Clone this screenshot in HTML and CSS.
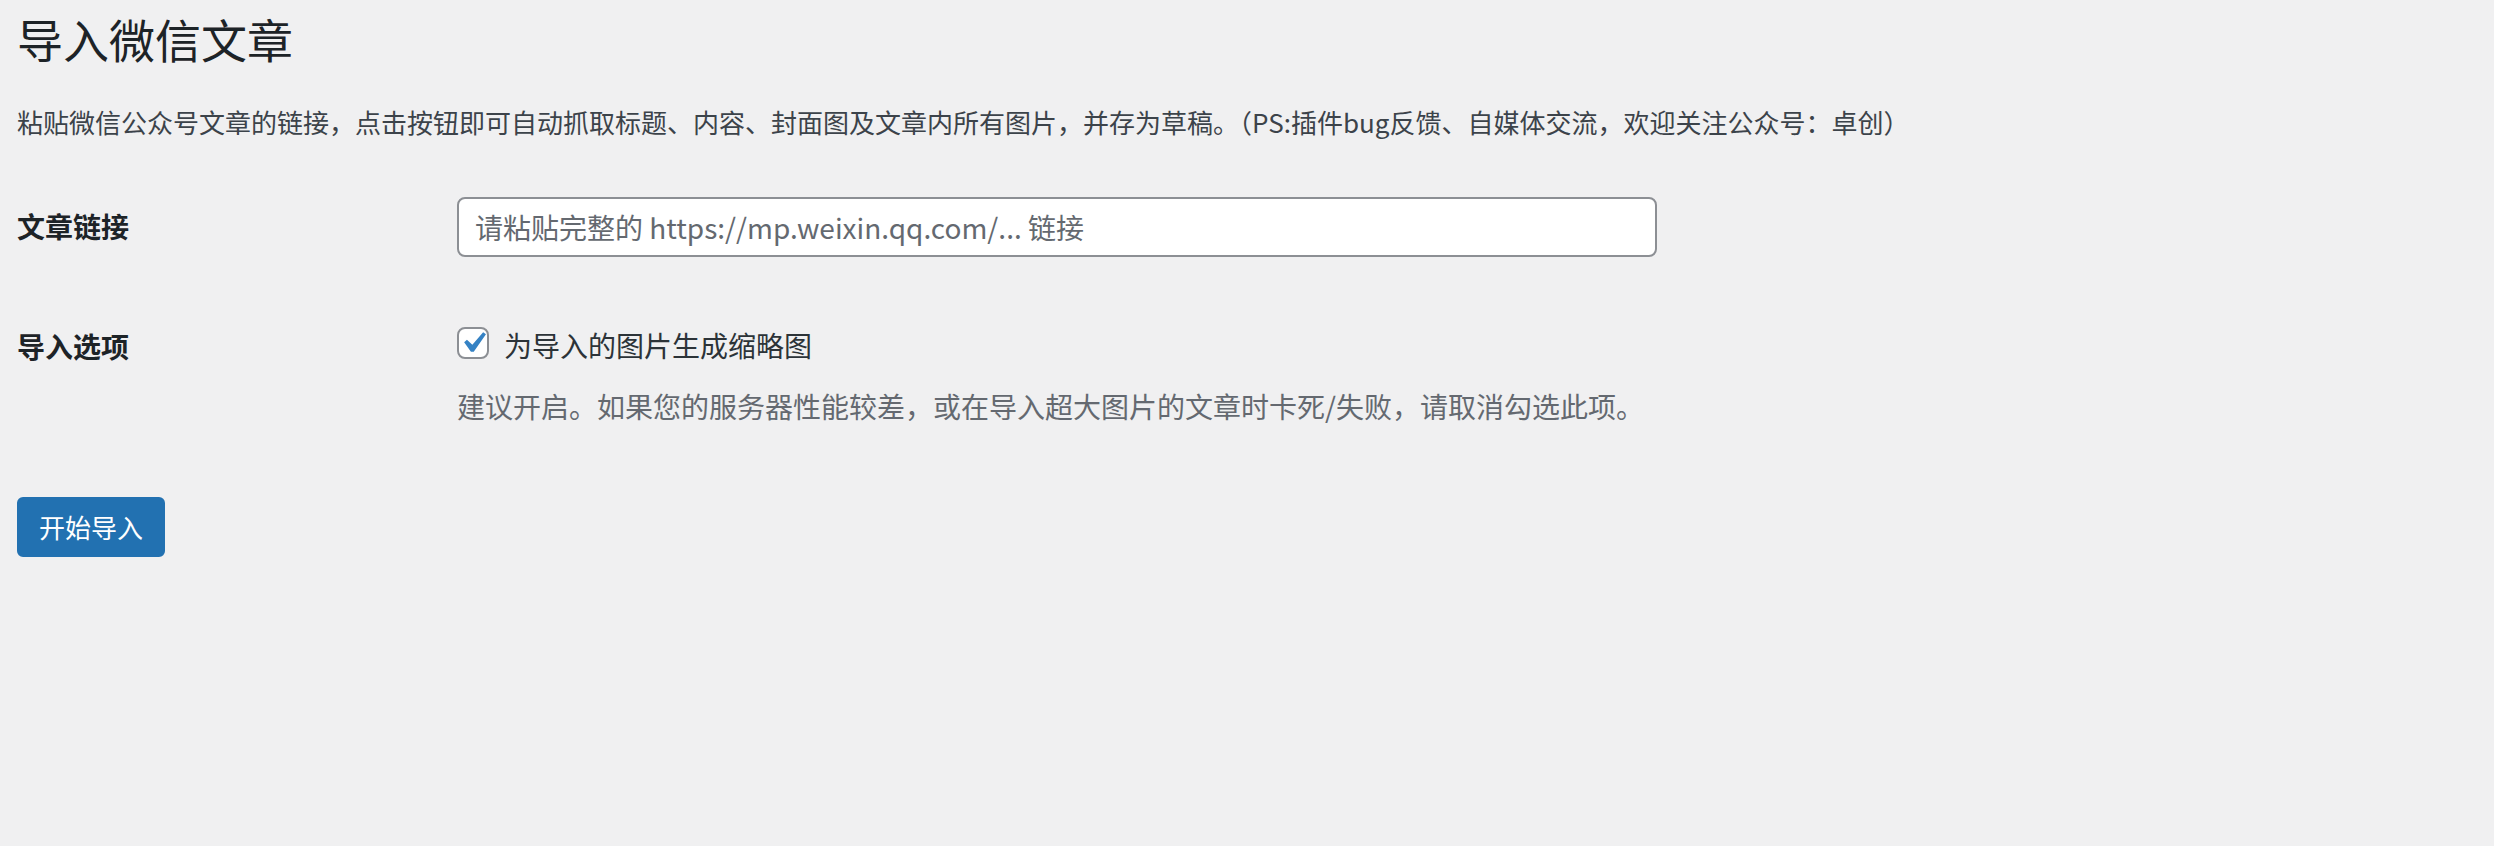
FILE: index.html
```html
<!DOCTYPE html>
<html lang="zh-CN">
<head>
<meta charset="utf-8">
<title>导入微信文章</title>
<link rel="stylesheet" href="styles.css">
</head>
<body>
<div class="wrap">
  <h1 class="page-title">导入微信文章</h1>
  <p class="intro">粘贴微信公众号文章的链接，点击按钮即可自动抓取标题、内容、封面图及文章内所有图片，并存为草稿。（PS:插件bug反馈、自媒体交流，欢迎关注公众号：卓创）</p>
  <form class="form-table">
    <div class="form-row">
      <div class="row-label">文章链接</div>
      <div class="row-field">
        <input class="text-input" type="text" placeholder="请粘贴完整的 https://mp.weixin.qq.com/... 链接">
      </div>
    </div>
    <div class="form-row">
      <div class="row-label">导入选项</div>
      <div class="row-field">
        <label class="check-line">
          <span class="check-box">
            <svg viewBox="0 0 20 20" width="42" height="42"><path fill="#3582c4" d="M14.83 4.89l1.34.94-5.81 8.38H9.02L5.78 9.67l1.34-1.25 2.570 2.4z"/></svg>
          </span>
          <span class="check-text">为导入的图片生成缩略图</span>
        </label>
        <p class="description">建议开启。如果您的服务器性能较差，或在导入超大图片的文章时卡死/失败，请取消勾选此项。</p>
      </div>
    </div>
    <div class="submit-line">
      <button type="button" class="button-primary">开始导入</button>
    </div>
  </form>
</div>
</body>
</html>
```

FILE: styles.css
```css
html, body {
  margin: 0;
  padding: 0;
  background: #f0f0f1;
}

body {
  font-family: "Noto Sans CJK SC", "Noto Sans", sans-serif;
  font-size: 26px;
  line-height: 1.5;
  color: #3c434a;
}

.wrap {
  padding: 0 20px 0 17px;
}

.page-title {
  margin: 0;
  padding: 8px 0 8px;
  font-size: 46px;
  line-height: 60px;
  font-weight: 400;
  color: #1d2327;
}

.intro {
  margin: 26px 0;
  line-height: 39px;
  color: #3c434a;
}

.form-table {
  margin: 0;
}

.form-row {
  display: grid;
  grid-template-columns: 420px 1fr;
}

.row-label {
  padding: 40px 20px 40px 0;
  font-size: 28px;
  line-height: 38px;
  font-weight: 700;
  color: #1d2327;
}

.row-field {
  padding: 30px 20px;
  font-size: 28px;
  line-height: 36px;
}

.text-input {
  display: block;
  box-sizing: border-box;
  width: 1200px;
  height: 60px;
  margin: 0;
  padding: 0 16px;
  border: 2px solid #8c8f94;
  border-radius: 8px;
  background: #fff;
  font-family: "Noto Sans CJK SC", "Noto Sans", sans-serif;
  font-size: 28px;
  color: #2c3338;
  outline: none;
}

.text-input::placeholder {
  color: #646970;
  opacity: 1;
}

.check-line {
  display: flex;
  align-items: center;
  gap: 15px;
  height: 56px;
  margin-bottom: 14px;
}

.check-box {
  position: relative;
  box-sizing: border-box;
  width: 32px;
  height: 32px;
  flex: none;
  border: 2px solid #8c8f94;
  border-radius: 8px;
  background: #fff;
  margin-top: -4px;
}

.check-box svg {
  position: absolute;
  left: -7px;
  top: -7px;
}

.check-text {
  color: #2c3338;
  font-size: 28px;
  line-height: 36px;
}

.description {
  margin: 0;
  font-size: 28px;
  line-height: 39px;
  color: #646970;
}

.submit-line {
  padding-top: 41px;
}

.button-primary {
  box-sizing: border-box;
  height: 60px;
  padding: 0 20px;
  border: 2px solid #2271b1;
  border-radius: 6px;
  background: #2271b1;
  color: #fff;
  font-family: "Noto Sans CJK SC", "Noto Sans", sans-serif;
  font-size: 26px;
  line-height: 56px;
  cursor: pointer;
}
```
